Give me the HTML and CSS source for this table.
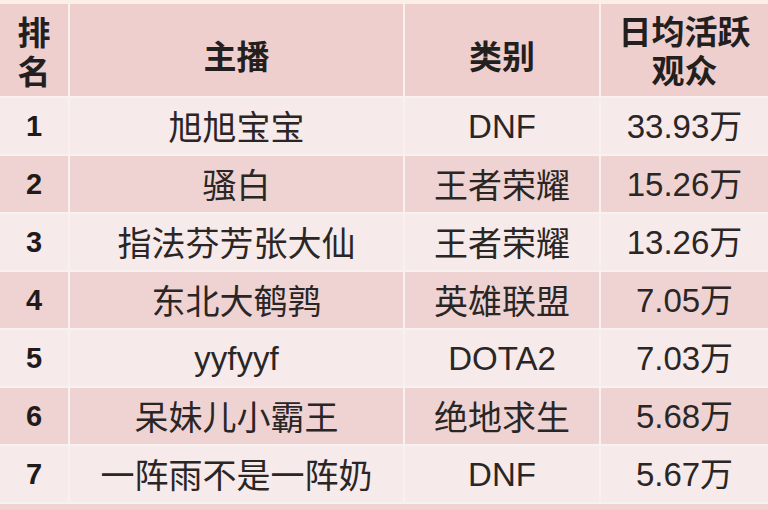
FILE: index.html
```html
<!DOCTYPE html>
<html lang="zh-CN">
<head>
<meta charset="utf-8">
<title>主播日均活跃观众排名</title>
<link rel="stylesheet" href="styles.css">
</head>
<body>
<div class="page">
  <div class="table">
    <div class="cell head rank"><span class="lines"><span class="line">排</span><span class="line">名</span></span></div>
    <div class="cell head single">主播</div>
    <div class="cell head single">类别</div>
    <div class="cell head"><span class="lines"><span class="line">日均活跃</span><span class="line">观众</span></span></div>

    <div class="cell odd rank">1</div>
    <div class="cell odd">旭旭宝宝</div>
    <div class="cell odd lat">DNF</div>
    <div class="cell odd lat">33.93万</div>

    <div class="cell even rank">2</div>
    <div class="cell even">骚白</div>
    <div class="cell even">王者荣耀</div>
    <div class="cell even lat">15.26万</div>

    <div class="cell odd rank">3</div>
    <div class="cell odd">指法芬芳张大仙</div>
    <div class="cell odd">王者荣耀</div>
    <div class="cell odd lat">13.26万</div>

    <div class="cell even rank">4</div>
    <div class="cell even">东北大鹌鹑</div>
    <div class="cell even">英雄联盟</div>
    <div class="cell even lat">7.05万</div>

    <div class="cell odd rank">5</div>
    <div class="cell odd lat">yyfyyf</div>
    <div class="cell odd lat">DOTA2</div>
    <div class="cell odd lat">7.03万</div>

    <div class="cell even rank">6</div>
    <div class="cell even">呆妹儿小霸王</div>
    <div class="cell even">绝地求生</div>
    <div class="cell even lat">5.68万</div>

    <div class="cell odd rank">7</div>
    <div class="cell odd">一阵雨不是一阵奶</div>
    <div class="cell odd lat">DNF</div>
    <div class="cell odd lat">5.67万</div>
  </div>
</div>
</body>
</html>
```

FILE: styles.css
```css
html, body {
  margin: 0;
  padding: 0;
}
body {
  width: 768px;
  height: 510px;
  overflow: hidden;
  background: #eed3d2;
  font-family: "Noto Sans CJK SC", "Liberation Sans", sans-serif;
  color: #2a2626;
}
.page {
  padding-top: 4px;
  background: linear-gradient(#fbefe8 0, #fbefe8 4px, #eed3d2 4px);
}
.table {
  display: grid;
  grid-template-columns: 68px 333px 194px 1fr;
  grid-template-rows: 92px;
  grid-auto-rows: 56px;
  column-gap: 2px;
  row-gap: 2px;
  background: #f9f1f0;
  padding-bottom: 2px;
}
.cell {
  display: flex;
  align-items: center;
  justify-content: center;
  font-size: 34px;
  line-height: 1;
  white-space: nowrap;
}
.head {
  background: #eecfce;
  font-weight: 700;
  font-size: 33px;
  text-align: center;
  color: #231f1f;
}
.lines {
  display: flex;
  flex-direction: column;
  align-items: center;
}
.line {
  display: block;
  height: 39px;
  line-height: 39px;
}
.head.single {
  padding-top: 10px;
}
.head.rank {
  padding-top: 2px;
}
.odd {
  background: #f7eaea;
}
.even {
  background: #efd3d2;
}
.rank:not(.head) {
  font-family: "Liberation Sans", sans-serif;
  font-weight: 700;
  font-size: 29px;
  color: #1f1b1b;
}
.lat {
  font-family: "Liberation Sans", "Noto Sans CJK SC", sans-serif;
  font-size: 33px;
}
```
